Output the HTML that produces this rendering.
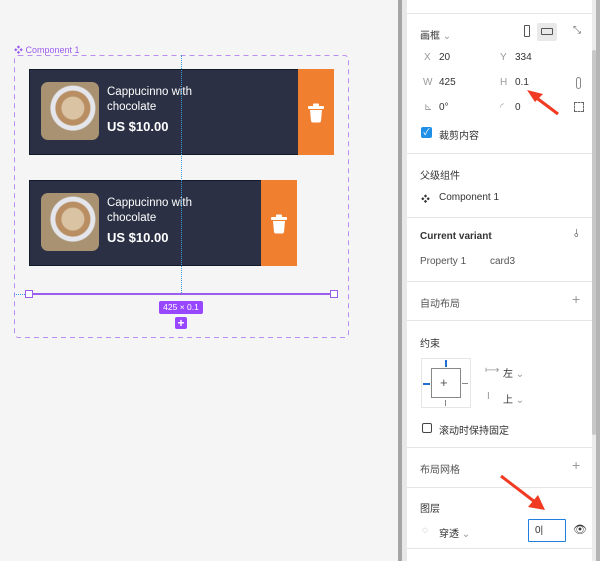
<!DOCTYPE html>
<html><head><meta charset="utf-8"><style>
*{margin:0;padding:0;box-sizing:border-box}
body{width:600px;height:561px;overflow:hidden;background:#f5f5f5;position:relative;font-family:"Liberation Sans","Noto Sans CJK SC",sans-serif;}
.a{position:absolute}
.t{position:absolute;font-size:10px;color:#333;white-space:nowrap}
.g{color:#999}
.hr{position:absolute;left:407px;width:185px;height:1px;background:#e6e6e6}
.card{position:absolute;background:#2b3044;border:1px solid #111a2a}
.title{position:absolute;left:77px;top:15px;color:#fff;font-size:11.5px;line-height:15px}
.price{position:absolute;left:77px;top:49px;color:#fff;font-size:13px;font-weight:bold}
.img{position:absolute;left:11px;top:12px;width:58px;height:58px;border-radius:7px;background:radial-gradient(circle at 55% 45%,#d9c3a3 0 11px,#b88e62 12px 17px,#e4e6ec 18px 22px,#a89272 23px 40px)}
.or{position:absolute;background:#f07f30}
</style></head><body>
<!-- canvas -->
<div class="t" style="left:14px;top:43px;color:#9b5ff0;font-size:9px">❖ Component 1</div>
<svg class="a" style="left:14px;top:55px" width="335" height="283"><rect x="0.5" y="0.5" width="334" height="282" rx="4" fill="none" stroke="#b98ef0" stroke-dasharray="5,4"/></svg>

<div class="card" style="left:29px;top:69px;width:270px;height:86px">
 <div class="img"></div>
 <div class="title">Cappucinno with<br>chocolate</div>
 <div class="price">US $10.00</div>
</div>
<div class="or" style="left:298px;top:69px;width:36px;height:86px"></div>
<svg class="a" style="left:307px;top:103px" width="18" height="20" viewBox="0 0 18 20"><rect x="1" y="3" width="16" height="3" rx="1" fill="#fff"/><rect x="6" y="0.5" width="6" height="3" rx="1" fill="#fff"/><path d="M3 7h12l-1 11a2 2 0 0 1-2 1.5H6A2 2 0 0 1 4 18z" fill="#fff"/></svg>

<div class="card" style="left:29px;top:180px;width:233px;height:86px">
 <div class="img"></div>
 <div class="title">Cappucinno with<br>chocolate</div>
 <div class="price">US $10.00</div>
</div>
<div class="or" style="left:261px;top:180px;width:36px;height:86px"></div>
<svg class="a" style="left:270px;top:214px" width="18" height="20" viewBox="0 0 18 20"><rect x="1" y="3" width="16" height="3" rx="1" fill="#fff"/><rect x="6" y="0.5" width="6" height="3" rx="1" fill="#fff"/><path d="M3 7h12l-1 11a2 2 0 0 1-2 1.5H6A2 2 0 0 1 4 18z" fill="#fff"/></svg>

<div class="a" style="left:181px;top:55px;width:0;height:238px;border-left:1px dotted #3a9ad9"></div>
<div class="a" style="left:14px;top:294px;width:15px;border-top:1px dotted #3a9ad9"></div>
<div class="a" style="left:29px;top:293px;width:305px;height:2px;background:#9b5ff0"></div>
<div class="a" style="left:25px;top:290px;width:8px;height:8px;background:#fff;border:1px solid #9b5ff0"></div>
<div class="a" style="left:330px;top:290px;width:8px;height:8px;background:#fff;border:1px solid #9b5ff0"></div>
<div class="a" style="left:159px;top:301px;width:44px;height:13px;background:#9747ff;border-radius:2px;color:#fff;font-size:8.5px;text-align:center;line-height:13px">425 × 0.1</div>
<div class="a" style="left:175px;top:317px;width:12px;height:12px;background:#9747ff;border-radius:2px;color:#fff;font-size:12px;text-align:center;line-height:12px;font-weight:bold">+</div>

<!-- panel -->
<div class="a" style="left:398px;top:0;width:4px;height:561px;background:#a5a5a5"></div>
<div class="a" style="left:402px;top:0;width:5px;height:561px;background:#e8e8e8"></div>
<div class="a" style="left:407px;top:0;width:185px;height:561px;background:#fff"></div>
<div class="a" style="left:592px;top:0;width:8px;height:561px;background:#ececec"></div>
<div class="a" style="left:592px;top:50px;width:4px;height:385px;background:#c8c8c8;border-radius:2px"></div>
<div class="a" style="left:596px;top:0;width:4px;height:561px;background:#b5b5b5"></div>

<div class="hr" style="top:13px"></div>
<div class="t" style="left:420px;top:27px">画框 <span class="g">⌄</span></div>
<div class="a" style="left:524px;top:25px;width:6px;height:12px;border:1px solid #555;border-radius:1px"></div>
<div class="a" style="left:537px;top:23px;width:20px;height:18px;background:#e9e9e9;border-radius:2px"></div>
<div class="a" style="left:541px;top:28px;width:12px;height:7px;border:1px solid #555;border-radius:1px"></div>
<div class="t" style="left:573px;top:25px;font-size:10px;color:#666">⤡</div>
<div class="t g" style="left:424px;top:52px">X</div><div class="t" style="left:439px;top:52px">20</div>
<div class="t g" style="left:500px;top:52px">Y</div><div class="t" style="left:515px;top:52px">334</div>
<div class="t g" style="left:423px;top:77px">W</div><div class="t" style="left:439px;top:77px">425</div>
<div class="t g" style="left:500px;top:77px">H</div><div class="t" style="left:515px;top:77px">0.1</div>
<div class="a" style="left:576px;top:77px;width:5px;height:12px;border:1px solid #888;border-radius:3px"></div>
<div class="t g" style="left:424px;top:102px">⊾</div><div class="t" style="left:439px;top:102px">0°</div>
<div class="t g" style="left:500px;top:102px">◜</div><div class="t" style="left:515px;top:102px">0</div>
<div class="a" style="left:574px;top:102px;width:10px;height:10px;border:1px dashed #666"></div>
<div class="a" style="left:421px;top:127px;width:11px;height:11px;background:#1f8fe8;border-radius:2px;color:#fff;font-size:9px;line-height:11px;text-align:center">✓</div>
<div class="t" style="left:439px;top:127px">裁剪内容</div>
<div class="hr" style="top:153px"></div>
<div class="t" style="left:420px;top:167px">父级组件</div>
<div class="t" style="left:421px;top:192px;font-size:9px">❖</div>
<div class="t" style="left:439px;top:192px">Component 1</div>
<div class="hr" style="top:217px"></div>
<div class="t" style="left:420px;top:231px;font-weight:bold">Current variant</div>
<div class="t" style="left:574px;top:228px;font-size:11px">⫰</div>
<div class="t g" style="left:420px;top:256px;color:#555">Property 1</div>
<div class="t" style="left:490px;top:256px;color:#555">card3</div>
<div class="hr" style="top:281px"></div>
<div class="t" style="left:420px;top:295px;color:#555">自动布局</div>
<div class="t g" style="left:572px;top:291px;font-size:14px">+</div>
<div class="hr" style="top:320px"></div>
<div class="t" style="left:420px;top:335px">约束</div>
<div class="a" style="left:421px;top:358px;width:50px;height:50px;border:1px solid #e6e6e6"></div>
<div class="a" style="left:431px;top:368px;width:30px;height:30px;border:1px solid #888"></div>
<div class="t" style="left:440px;top:375px;font-size:13px;color:#555">+</div>
<div class="a" style="left:445px;top:360px;width:2px;height:7px;background:#1f6fd0"></div>
<div class="a" style="left:445px;top:400px;width:1px;height:6px;background:#888"></div>
<div class="a" style="left:423px;top:383px;width:7px;height:2px;background:#1f6fd0"></div>
<div class="a" style="left:462px;top:383px;width:6px;height:1px;background:#888"></div>
<div class="t g" style="left:485px;top:365px">⟼</div><div class="t" style="left:503px;top:365px">左 <span class="g">⌄</span></div>
<div class="t g" style="left:487px;top:391px">I</div><div class="t" style="left:503px;top:391px">上 <span class="g">⌄</span></div>
<div class="a" style="left:422px;top:423px;width:10px;height:10px;border:1px solid #444;border-radius:2px"></div>
<div class="t" style="left:439px;top:422px">滚动时保持固定</div>
<div class="hr" style="top:447px"></div>
<div class="t" style="left:420px;top:461px;color:#555">布局网格</div>
<div class="t g" style="left:572px;top:457px;font-size:14px">+</div>
<div class="hr" style="top:487px"></div>
<div class="t" style="left:420px;top:500px">图层</div>
<div class="t g" style="left:422px;top:525px">◌</div>
<div class="t" style="left:439px;top:525px">穿透 <span class="g">⌄</span></div>
<div class="a" style="left:528px;top:519px;width:38px;height:23px;border:1.5px solid #1f7fe0;border-radius:1px"></div>
<div class="t" style="left:535px;top:525px">0|</div>
<div class="t" style="left:573px;top:523px;font-size:11px">👁</div>
<div class="hr" style="top:548px"></div>

<!-- arrows -->
<svg class="a" style="left:0;top:0" width="600" height="561">
<line x1="558" y1="114" x2="534" y2="96" stroke="#f03a22" stroke-width="3"/>
<polygon points="527,90 543,94 535,102" fill="#f03a22"/>
<line x1="501" y1="476" x2="535" y2="502" stroke="#f03a22" stroke-width="3"/>
<polygon points="545,510 528,507 538,495" fill="#f03a22"/>
</svg>
</body></html>
